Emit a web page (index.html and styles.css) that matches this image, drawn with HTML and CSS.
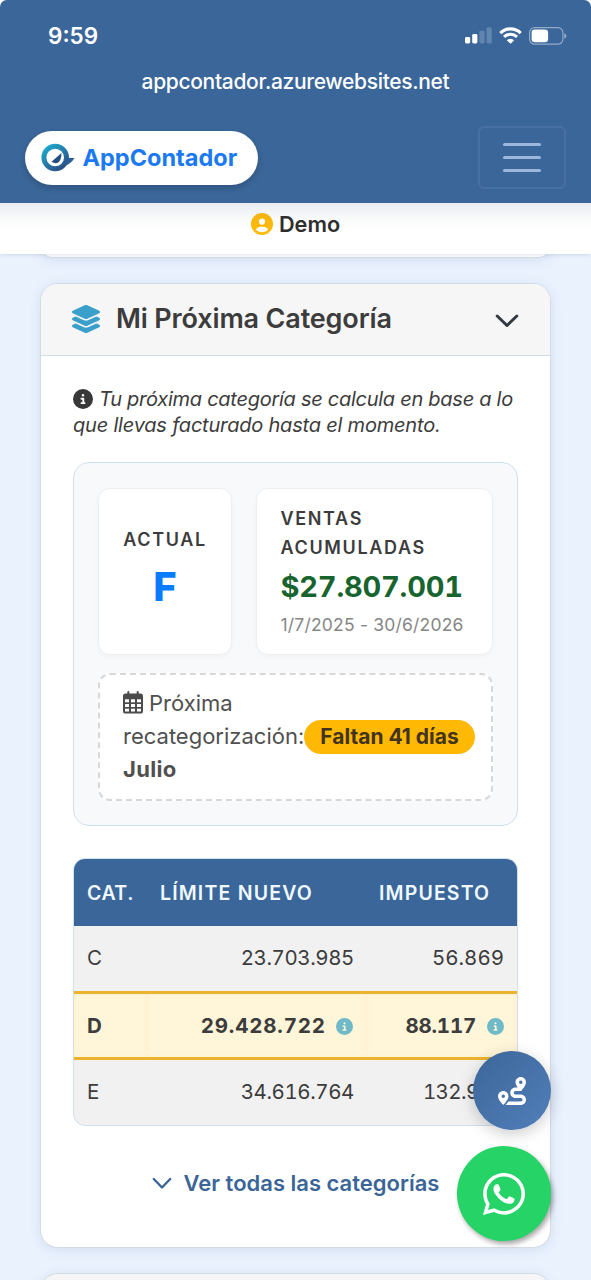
FILE: index.html
```html
<!DOCTYPE html>
<html lang="es">
<head>
<meta charset="utf-8">
<title>AppContador</title>
<link rel="stylesheet" href="styles.css">
</head>
<body>
<svg class="defs" width="0" height="0">
  <symbol id="info" viewBox="0 0 512 512"><path d="M256 512A256 256 0 1 0 256 0a256 256 0 1 0 0 512zM216 336h24V272H216c-13.3 0-24-10.7-24-24s10.7-24 24-24h48c13.3 0 24 10.7 24 24v88h8c13.3 0 24 10.7 24 24s-10.7 24-24 24H216c-13.3 0-24-10.7-24-24s10.7-24 24-24zm40-208a32 32 0 1 1 0 64 32 32 0 1 1 0-64z"/></symbol>
</svg>
<div class="screen">
  <header class="top">
    <div class="status">
      <span class="clock">9:59</span>
      <div class="indicators">
        <svg width="27" height="17" viewBox="0 0 27 17" fill="#fff"><rect x="0" y="10" width="5.2" height="6.5" rx="1.4"/><rect x="7.2" y="7" width="5.2" height="9.500" rx="1.4"/><g opacity=".2"><rect x="14.400" y="3.800" width="5.200" height="12.700" rx="1.400"/><rect x="21.600" y="0.300" width="5.200" height="16.200" rx="1.400"/></g></svg>
        <svg class="wifi" width="23" height="17" viewBox="0 0 23 17" fill="none" stroke="#fff" stroke-width="3.1"><path d="M1.300 6.100A14.500 14.500 0 0 1 21.700 6.100M5 9.900A9.300 9.300 0 0 1 18 9.900"/><path d="M11.500 16.800L7.800 13.200A5.300 5.300 0 0 1 15.200 13.200Z" fill="#fff" stroke="none"/></svg>
        <svg class="battery" width="38" height="18" viewBox="0 0 38 18"><rect x=".6" y=".6" width="33.300" height="16.600" rx="5" fill="none" stroke="#fff" stroke-opacity=".45" stroke-width="1.200"/><rect x="2.600" y="2.600" width="16.500" height="12.600" rx="3.300" fill="#fff"/><path d="M35.400 6.300q2 .8 2 2.700t-2 2.700z" fill="#fff" fill-opacity=".5"/></svg>
      </div>
    </div>
    <div class="url"><span>appcontador.azurewebsites.net</span></div>
    <nav class="nav">
      <a class="brand">
        <svg width="34" height="29" viewBox="0 0 34 29"><defs><linearGradient id="lg" x1="0" y1="0" x2=".8" y2="1"><stop offset="0" stop-color="#1aaed0"/><stop offset=".5" stop-color="#2681ad"/><stop offset="1" stop-color="#2b4f86"/></linearGradient></defs><circle cx="14.200" cy="14.500" r="11.300" fill="none" stroke="url(#lg)" stroke-width="5"/><path d="M25 14.800L33.500 15Q30 20.800 23.500 23Q26 19 25 14.800Z" fill="#2b5e92"/><path d="M10.500 18.800L20.500 10Q20.500 16.500 17.500 19.200Q14.500 21.300 10.500 18.800Z" fill="#234f80"/></svg>
        <span>AppContador</span>
      </a>
      <div class="toggler"><i></i><i></i><i></i></div>
    </nav>
  </header>
  <div class="user">
    <svg width="22" height="22" viewBox="0 0 512 512" fill="#ffb90a"><path d="M399 384.200C376.900 345.800 335.400 320 288 320H224c-47.400 0-88.900 25.800-111 64.200c35.200 39.200 86.200 63.800 143 63.800s107.800-24.700 143-63.800zM0 256a256 256 0 1 1 512 0A256 256 0 1 1 0 256zm256 16a72 72 0 1 0 0-144 72 72 0 1 0 0 144z"/></svg>
    <span>Demo</span>
  </div>
  <main class="main">
    <section class="card card-prev"></section>
    <section class="card">
      <div class="card-head">
        <svg width="32" height="28" viewBox="0 0 576 512" fill="#3a9fca"><path d="M264.500 5.200c14.900-6.900 32.100-6.900 47 0l218.600 101c8.500 3.900 13.900 12.400 13.900 21.800s-5.400 17.900-13.900 21.800l-218.600 101c-14.900 6.900-32.100 6.900-47 0L45.900 149.800C37.400 145.800 32 137.300 32 128s5.400-17.900 13.900-21.800L264.500 5.200zM476.900 209.600l53.200 24.600c8.500 3.900 13.900 12.400 13.900 21.800s-5.400 17.900-13.900 21.800l-218.600 101c-14.900 6.900-32.100 6.900-47 0L45.900 277.800C37.400 273.800 32 265.300 32 256s5.400-17.900 13.900-21.800l53.200-24.600 152 70.200c23.400 10.800 50.400 10.800 73.800 0l152-70.200zm-152 198.200l152-70.200 53.200 24.600c8.500 3.900 13.900 12.400 13.900 21.800s-5.400 17.900-13.900 21.800l-218.600 101c-14.900 6.900-32.100 6.900-47 0L45.900 405.800C37.400 401.800 32 393.300 32 384s5.400-17.900 13.900-21.800l53.200-24.600 152 70.200c23.400 10.800 50.400 10.800 73.800 0z"/></svg>
        <h2>Mi Próxima Categoría</h2>
        <svg class="chev" width="24" height="14" viewBox="0 0 24 14" fill="none" stroke="#343a40" stroke-width="3" stroke-linecap="round" stroke-linejoin="round"><path d="M2.200 2L12 11.500L21.800 2"/></svg>
      </div>
      <div class="card-body">
        <p class="note"><svg class="note-icon" width="20" height="20" fill="#383838"><use href="#info"/></svg><span class="l1">Tu próxima categoría se calcula en base a lo</span><br><span class="l2">que llevas facturado hasta el momento.</span></p>
        <div class="summary">
          <div class="stats">
            <div class="stat current"><span class="label">ACTUAL</span><span class="letter">F</span></div>
            <div class="stat sales"><span class="label">VENTAS<br>ACUMULADAS</span><span class="amount">$27.807.001</span><span class="period">1/7/2025 - 30/6/2026</span></div>
          </div>
          <div class="next">
            <div class="next-text">
              <svg width="20" height="23" viewBox="0 0 20 23"><rect x="4.300" y="0" width="2" height="5" rx="1" fill="#4b4b4b"/><rect x="13.700" y="0" width="2" height="5" rx="1" fill="#4b4b4b"/><rect x="0" y="2.500" width="20" height="20" rx="2.600" fill="#4b4b4b"/><g fill="#fff"><rect x="2" y="8.300" width="4" height="3"/><rect x="8" y="8.300" width="4" height="3"/><rect x="14" y="8.300" width="4" height="3"/><rect x="2" y="13" width="4" height="3"/><rect x="8" y="13" width="4" height="3"/><rect x="14" y="13" width="4" height="3"/><rect x="2" y="17.700" width="4" height="2.800"/><rect x="8" y="17.700" width="4" height="2.800"/><rect x="14" y="17.700" width="4" height="2.800"/></g></svg><span class="n1">Próxima</span><br><span class="n2">recategorización:</span><br><b>Julio</b>
            </div>
            <span class="pill">Faltan 41 días</span>
          </div>
        </div>
        <div class="table">
          <div class="row thead"><div>CAT.</div><div class="h2">LÍMITE NUEVO</div><div class="h3">IMPUESTO</div></div>
          <div class="row"><div>C</div><div class="limit">23.703.985</div><div>56.869</div></div>
          <div class="row active"><div>D</div><div><span class="wide">29.428.722</span><svg width="17" height="17" fill="#6fb9c8"><use href="#info"/></svg></div><div><span class="tight">88.117</span><svg width="17" height="17" fill="#6fb9c8"><use href="#info"/></svg></div></div>
          <div class="row last"><div>E</div><div class="limit">34.616.764</div><div class="tax">132.938</div></div>
        </div>
        <a class="more"><svg width="20" height="13" viewBox="0 0 20 13" fill="none" stroke="#3b6597" stroke-width="2.400" stroke-linecap="round" stroke-linejoin="round"><path d="M1.800 2L10 10.500L18.200 2"/></svg><span>Ver todas las categorías</span></a>
      </div>
    </section>
    <section class="card card-next"></section>
  </main>
  <div class="floating">
    <a class="fab route"><svg width="28" height="28" viewBox="0 0 512 512" fill="#fff"><path d="M512 96c0 50.200-59.100 125.100-84.600 155c-3.800 4.400-9.400 6.100-14.500 5H320c-17.700 0-32 14.300-32 32s14.300 32 32 32h96c53 0 96 43 96 96s-43 96-96 96H139.600c8.700-9.900 19.300-22.600 30-36.800c6.300-8.400 12.800-17.600 19-27.200H416c17.700 0 32-14.300 32-32s-14.300-32-32-32H320c-53 0-96-43-96-96s43-96 96-96h39.800c-21-31.500-39.800-67.700-39.800-96c0-53 43-96 96-96s96 43 96 96zM117.100 489.100c-3.800 4.300-7.200 8.100-10.100 11.300l-1.800 2-.2-.2c-6 4.600-14.600 4-20-1.800C59.800 473 0 402.500 0 352c0-53 43-96 96-96s96 43 96 96c0 30-21.100 67-43.500 97.900c-10.700 14.700-21.700 28-30.800 38.500l-.6 .7zM128 352a32 32 0 1 0 -64 0 32 32 0 1 0 64 0zM416 128a32 32 0 1 0 0-64 32 32 0 1 0 0 64z"/></svg></a>
    <a class="fab whatsapp"><svg width="42" height="42" viewBox="0 32 448 448" fill="#fff"><path d="M380.900 97.100C339 55.100 283.200 32 223.900 32c-122.400 0-222 99.600-222 222 0 39.100 10.200 77.300 29.600 111L0 480l117.700-30.900c32.400 17.700 68.900 27 106.100 27h.1c122.300 0 224.100-99.600 224.100-222 0-59.300-25.200-115-67.100-157zm-157 341.600c-33.200 0-65.700-8.900-94-25.700l-6.700-4-69.800 18.300L72 359.200l-4.400-7c-18.500-29.400-28.200-63.300-28.200-98.200 0-101.700 82.800-184.500 184.600-184.500 49.300 0 95.600 19.200 130.400 54.100 34.800 34.900 56.200 81.200 56.100 130.500 0 101.800-84.900 184.600-186.600 184.600zm101.200-138.200c-5.500-2.800-32.800-16.200-37.900-18-5.100-1.900-8.800-2.800-12.500 2.800-3.700 5.600-14.300 18-17.600 21.800-3.200 3.700-6.500 4.200-12 1.400-32.600-16.300-54-29.100-75.500-66-5.700-9.800 5.700-9.100 16.300-30.300 1.800-3.700.9-6.900-.5-9.700-1.400-2.800-12.500-30.100-17.100-41.200-4.500-10.800-9.100-9.300-12.500-9.500-3.200-.2-6.900-.2-10.600-.2-3.700 0-9.700 1.400-14.800 6.900-5.100 5.600-19.400 19-19.400 46.300 0 27.300 19.900 53.700 22.600 57.400 2.800 3.700 39.100 59.700 94.800 83.800 35.200 15.200 49 16.500 66.600 13.900 10.700-1.600 32.800-13.400 37.400-26.400 4.600-13 4.600-24.100 3.200-26.400-1.300-2.500-5-3.900-10.500-6.600z"/></svg></a>
  </div>
</div>
</body>
</html>
```
FILE: styles.css
```css
* { box-sizing: border-box; }
body { margin: 0; background: #fff; font-family: Inter, "Liberation Sans", sans-serif; color: #3c3c3c; }
.defs { display: block; height: 0; }
svg { display: block; flex: none; }
.screen { position: relative; height: 1280px; overflow: hidden; background: #eaf2fe; border-radius: 7px 7px 0 0; display: flex; flex-direction: column; }

.top { position: relative; z-index: 3; flex: none; height: 203px; padding-top: 18px; background: #3b6699; color: #fff; }
.top::after { content: ""; position: absolute; top: 100%; left: 0; right: 0; height: 26px; background: linear-gradient(rgba(60, 80, 120, .11), rgba(60, 80, 120, .02) 70%, transparent); }
.status { display: flex; justify-content: space-between; align-items: center; height: 34px; margin: 0 24px 0 48px; padding-top: 1px; }
.clock { font-size: 22.500px; font-weight: 600; letter-spacing: 0; }
.indicators { display: flex; align-items: center; }
.wifi { margin-left: 7px; }
.battery { margin-left: 7px; }
.url { display: flex; justify-content: center; height: 30px; margin-top: 15px; line-height: 30px; font-size: 21px; font-weight: 500; letter-spacing: -.33px; }
.nav { display: flex; justify-content: space-between; align-items: center; height: 63px; margin: 29px 25px 0 25px; }
.brand { display: flex; align-items: center; gap: 8px; width: 233px; height: 54px; padding-left: 15.500px; background: #fff; border-radius: 27px; box-shadow: 0 3px 6px rgba(0, 0, 0, .18); color: #1b7af2; font-size: 23.500px; font-weight: 700; }
.toggler { display: flex; flex-direction: column; align-items: center; justify-content: center; gap: 10px; width: 88px; height: 63px; border: 2px solid #4970a5; border-radius: 6px; }
.toggler i { width: 38px; height: 3px; border-radius: 2px; background: #9db7dc; }

.user { position: relative; z-index: 2; flex: none; display: flex; justify-content: center; align-items: center; gap: 6px; height: 51px; padding-bottom: 9px; background: #fff; box-shadow: 0 1px 4px rgba(40, 70, 120, .15); color: #2e2e2e; font-size: 21.700px; font-weight: 600; }

.main { flex: 1; min-height: 0; padding: 0 40px; }
.card { background: #fff; border: 1px solid #d5dbe4; border-radius: 18px; box-shadow: 0 2px 12px rgba(60, 90, 140, .13); overflow: hidden; }
.card-prev { height: 24px; margin-top: -20px; }
.card-head { display: flex; align-items: center; height: 72px; padding: 0 31px 2px 29px; background: #f6f6f6; border-bottom: 1px solid #cfdde8; }
.card-head h2 { flex: 1; margin: 0 0 0 14px; font-size: 27px; font-weight: 600; line-height: 36px; letter-spacing: -.15px; white-space: nowrap; }
.chev { margin-top: 4px; }
.card-prev + .card { height: 965px; margin-top: 25px; }
.card-next { height: 60px; margin-top: 25px; background: #f6f6f6; }
.card-body { padding: 31px 32px 0; }
.note { margin: 0; height: 51px; font-size: 20px; font-style: italic; line-height: 25.500px; white-space: nowrap; }
.note-icon { display: inline-block; vertical-align: -3px; margin-right: 6px; }
.l1 { letter-spacing: -.27px; }
.l2 { letter-spacing: -.2px; }

.summary { height: 364px; margin-top: 24px; padding: 25px 24px; background: #f7f9fb; border: 1.500px solid #cfe0f1; border-radius: 16px; }
.stats { display: flex; gap: 24px; }
.stat { display: flex; flex-direction: column; height: 167px; background: #fff; border: 1.500px solid #eceff2; border-radius: 12px; box-shadow: 0 2px 6px rgba(0, 0, 0, .03); white-space: nowrap; }
.current { width: 134px; align-items: center; padding-top: 37px; }
.sales { flex: 1; padding: 16px 0 0 23.500px; }
.label { font-size: 18px; font-weight: 600; line-height: 28.500px; letter-spacing: 1.650px; }
.letter { color: #0a7cff; font-size: 40px; font-weight: 800; line-height: 48px; margin-top: 8px; }
.amount { color: #17642f; font-size: 29px; font-weight: 700; line-height: 40px; margin-top: 5px; letter-spacing: -.2px; font-variant-numeric: tabular-nums; }
.period { color: #868686; font-size: 17.500px; line-height: 24px; margin-top: 6px; letter-spacing: .2px; }
.next { display: flex; align-items: center; height: 128px; margin-top: 18px; padding: 0 0 2px 23px; background: #fff; border: 2px dashed #d6d8da; border-radius: 12px; white-space: nowrap; }
.next-text { color: #505050; font-size: 22px; line-height: 33px; width: 181px; }
.next-text svg { display: inline-block; vertical-align: -3px; margin-right: 6px; }
.next-text b { font-weight: 700; letter-spacing: .3px; }
.pill { height: 34px; width: 171px; margin-top: 2px; border-radius: 17px; background: #ffb905; color: #42331c; font-size: 21px; font-weight: 700; line-height: 34px; text-align: center; }

.table { margin-top: 32px; height: 268px; border: 1px solid #cfe0f1; border-radius: 12px; overflow: hidden; background: #f1f1f2; font-variant-numeric: tabular-nums; }
.row { display: grid; grid-template-columns: 73px 219px 1fr; height: 65px; font-size: 20.500px; }
.row > div { display: flex; align-items: center; justify-content: flex-end; padding: 0 13px 2px; white-space: nowrap; }
.row > div:first-child { justify-content: flex-start; }
.row > .limit { padding-right: 12px; letter-spacing: -.4px; }
.row > .tax { letter-spacing: -.6px; }
.row.thead { height: 67px; background: #3b6699; color: #f0f8ff; font-size: 19.500px; font-weight: 600; letter-spacing: 1.150px; }
.row.thead > div { justify-content: flex-start; padding-bottom: 0; }
.row.thead > div:first-child { letter-spacing: .5px; }
.row.active { height: 69px; background: #fff6da; border-top: 3px solid #ecb42e; border-bottom: 3px solid #ecb42e; font-weight: 700; }
.row.active > div { padding-bottom: 1px; box-shadow: inset 0 0 5px rgba(240, 185, 60, .1); }
.row.active svg { margin: 3px 0 0 11px; }
.wide { letter-spacing: .8px; margin-right: -.8px; }
.tight { letter-spacing: -.2px; }
.more { display: flex; align-items: center; justify-content: center; gap: 12px; margin-top: 41px; height: 32px; color: #3b6597; font-size: 22px; font-weight: 600; white-space: nowrap; }

.floating { position: absolute; z-index: 4; right: 40px; top: 1051px; display: flex; flex-direction: column; align-items: flex-end; gap: 16px; }
.fab { display: flex; align-items: center; justify-content: center; border-radius: 50%; }
.route { width: 78px; height: 79px; background: linear-gradient(135deg, #3b6699, #527fba); box-shadow: 0 4px 16px rgba(0, 0, 0, .2); }
.whatsapp { width: 94px; height: 95px; background: #25d366; box-shadow: 2px 3px 5px rgba(0, 0, 0, .35); }
```
